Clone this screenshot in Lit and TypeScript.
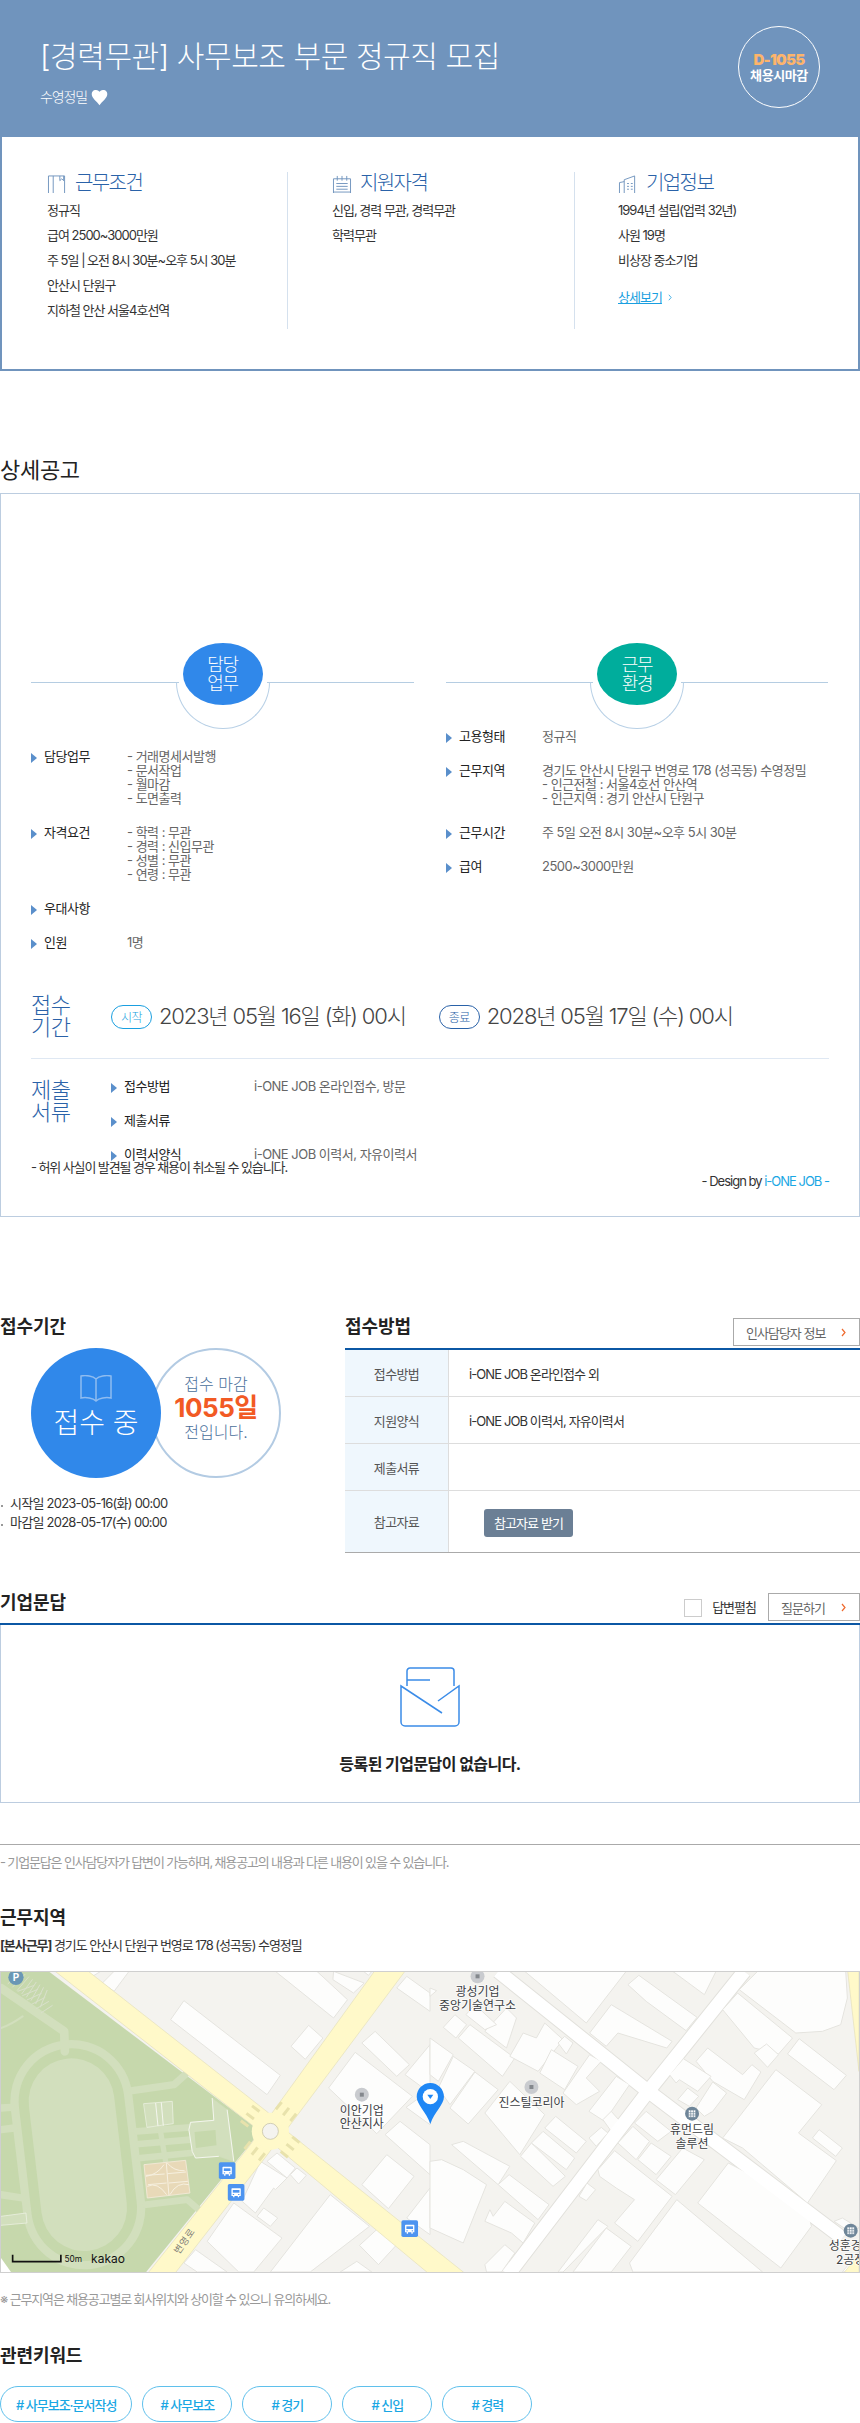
import { LitElement, html, css, svg } from "lit";
import { customElement } from "lit/decorators.js";

const FONT = css`Inter, "Noto Sans CJK KR", "Noto Sans", sans-serif`;

const LEFT_BUILDINGS = [
  "550,98 840,322 800,380 510,155", "925,172 968,210 915,274 872,235",
  "825,10 1000,150 1042,95 950,10", "1000,10 1092,45 1060,75 998,35", "305,45 340,10 385,10 340,70",
  "255,10 300,10 270,28", "1090,10 1115,10 1105,22",
  "985,360 1065,253 1237,385 1130,497", "1085,225 1125,190 1228,290 1190,325",
  "1190,60 1220,25 1290,75 1290,130", "1215,320 1290,230 1290,375", "1218,418 1250,395 1290,425 1290,470",
  "1155,500 1200,460 1290,530 1290,620", "1085,650 1160,560 1242,625 1165,722", "1220,750 1290,660 1290,800",
  "800,580 830,555 885,600 860,630", "870,620 890,600 918,622 895,648",
  "780,580 860,630 825,665 820,660 765,735 725,700", "770,745 790,720 832,750 810,775",
  "620,820 700,705 845,810 760,912 715,912", "550,885 585,845 680,912 590,912",
  "810,912 990,680 1108,775 930,912", "1078,832 1135,780 1190,830 1135,890", "1020,912 1070,880 1115,912",
];

const RIGHT_BUILDINGS = [
  "285,10 590,10 470,165", "595,50 628,22 803,148 770,188 650,100", "480,195 545,110 728,220 712,240 565,195 530,235",
  "730,10 860,10 825,80", "930,65 985,10 1250,10 1255,90 1235,170 1180,190 1100,195",
  "880,125 925,75 1090,210 1048,258 975,240", "1075,258 1110,212 1252,322 1215,365", "975,255 1012,228 1048,260 1015,298",
  "800,280 835,240 940,320 968,290 995,312 945,395 850,340", "720,320 762,272 845,325 805,370 750,335 740,345",
  "745,395 775,360 808,385 780,415", "800,420 850,342 892,375 850,430 825,445",
  "880,510 1040,305 1178,410 1108,495 1222,578 1135,705 940,540", "1150,510 1170,485 1240,540 1220,565",
  "805,705 897,585 1130,705 1147,775 1055,900", "600,885 742,695 1000,912 610,912",
  "680,635 760,540 825,575 738,680", "625,575 665,525 725,565 680,620", "565,525 610,475 660,520 620,575", "615,465 650,430 725,490 685,520",
  "505,605 555,548 728,685 625,820 555,765 615,695 560,660 510,625", "448,685 472,645 498,665 470,698",
  "385,912 505,755 535,775 400,912", "430,912 530,780 605,835 545,912", "170,912 165,890 225,830 255,855 215,912",
  "0,580 35,575 100,605 170,650 100,825 0,780", "165,760 180,725 190,745 225,700 315,765 280,825 245,795",
  "205,650 238,620 358,710 325,755", "65,530 100,520 240,595 205,650", "272,565 305,525 407,625 370,655",
  "305,525 340,490 435,570 410,605", "345,480 378,445 470,520 440,555", "165,435 240,340 345,440 270,560",
  "60,420 135,312 205,365 115,468", "25,360 70,265 135,310 60,410", "85,210 120,170 255,270 218,325",
  "40,178 75,140 110,170 78,210", "0,210 70,260 25,340 0,320", "165,190 230,120 260,150 230,240",
  "240,265 280,195 320,210 345,165 400,215 325,310", "330,315 365,245 445,295 405,365", "385,225 405,205 430,225 410,258",
  "400,375 480,260 515,280 470,330 510,370 440,410", "478,430 560,325 600,350 525,460", "520,455 545,430 570,458 545,490",
  "478,510 515,478 535,495 500,535", "108,140 135,110 200,170 165,185", "0,60 20,68 0,85",
  "1215,760 1240,750 1290,780 1260,790", "1240,912 1290,850 1290,912",
];

const CROSS_ARMS: [number, number][] = [[-0.8, -0.6], [0.62, -0.78], [0.78, 0.62], [-0.62, 0.78]];

function crossStripes() {
  const cx = 810, cy = 490;
  const out: { x1: number; y1: number; x2: number; y2: number }[] = [];
  for (const [dx, dy] of CROSS_ARMS) {
    for (const off of [-28, 0, 28]) {
      out.push({
        x1: cx + dx * 62 - dy * off, y1: cy + dy * 62 + dx * off,
        x2: cx + dx * 90 - dy * off, y2: cy + dy * 90 + dx * off,
      });
    }
  }
  return out;
}

function busIcon(x: number, y: number) {
  return svg`<g transform="translate(${x} ${y})">
    <rect class="bus-bg" width="50" height="50" rx="5"></rect>
    <path class="bus-fg" d="M13 13h24a2 2 0 0 1 2 2v21h-5v4h-4v-4H20v4h-4v-4h-5V15a2 2 0 0 1 2-2z"></path>
    <rect class="bus-bg" x="15" y="18" width="20" height="8"></rect>
    <rect class="bus-bg" x="15" y="30" width="4" height="3"></rect>
    <rect class="bus-bg" x="31" y="30" width="4" height="3"></rect>
  </g>`;
}

function poi(x: number, y: number, lines: string[], anchorY: number, dark = false) {
  return svg`
    <circle class=${dark ? "poi-dark" : "poi"} cx=${x} cy=${y} r="21"></circle>
    ${dark
      ? svg`<path class="poi-mark" d="M${x - 11} ${y - 11}h22v22h-22z M${x - 4} ${y - 11}v22 M${x + 4} ${y - 11}v22 M${x - 11} ${y - 3}h22 M${x - 11} ${y + 4}h22"></path>`
      : svg`<rect class="poi-square" x=${x - 6} y=${y - 6} width="12" height="12"></rect>`}
    ${lines.map((l, i) => svg`<text class="map-label" x=${x} y=${anchorY + i * 41}>${l}</text>`)}
  `;
}

@customElement("kakao-map")
export class KakaoMap extends LitElement {
  static styles = css`
    :host { display: block; height: 302px; border: 1px solid #cfcfcf; overflow: hidden; }
    svg { display: block; width: 858px; height: 300px; }
    .land { fill: #f4f3ef; }
    .bld { fill: #fdfdfc; stroke: #e5e4df; stroke-width: 3; }
    .park { fill: #c6d8ac; }
    .lite { fill: none; stroke: #d2dfbd; stroke-linecap: round; stroke-linejoin: round; }
    .dark { fill: none; stroke: #c6d8ac; stroke-linecap: round; }
    .road { fill: #fff9c9; stroke: #e4dfba; stroke-width: 2; }
    .road-fill { fill: #fff9c9; }
    .lane { fill: none; stroke: #e2e1dc; stroke-width: 46; }
    .lane-w { fill: none; stroke: #ffffff; stroke-width: 40; }
    .stripe { stroke: #e8e2ac; stroke-width: 9; }
    .island { fill: #f4f3ef; stroke: #bdb9a0; stroke-width: 2; }
    .white-line { fill: none; stroke: #f4f6ee; stroke-width: 3; }
    .court { fill: #e8d9b8; stroke: #f0e8d4; stroke-width: 3; }
    .court-line { fill: none; stroke: #f6f0e0; stroke-width: 3; }
    .park-cell { fill: #c6d8ac; }
    .corner { fill: #ffffff; }
    .p-bg { fill: #6a97b5; }
    .p-text { fill: #fff; font: 700 30px ${FONT}; text-anchor: middle; }
    .park-stripe { stroke: #d9e0cb; stroke-width: 3; }
    .bus-bg { fill: #4d94f0; }
    .bus-fg { fill: #fff; }
    .poi { fill: #c9cbcf; }
    .poi-square { fill: #84888d; }
    .poi-dark { fill: #6f8699; }
    .poi-mark { fill: #fff; stroke: #6f8699; stroke-width: 2; }
    .map-label { font: 400 36px ${FONT}; fill: #3c4043; text-anchor: middle; stroke: #fff; stroke-width: 5; stroke-opacity: 0.7; paint-order: stroke; letter-spacing: 0; }
    .road-label { font: 400 29px ${FONT}; fill: #85837a; text-anchor: middle; letter-spacing: 2px; }
    .scale { fill: none; stroke: #111; stroke-width: 5; }
    .scale-text { font: 400 25px ${FONT}; fill: #111; }
    .brand { font: 400 36px ${FONT}; fill: #111; }
    .pin { fill: #1f87f5; }
    .pin-hole { fill: #fff; }
  `;

  render() {
    return html`<svg viewBox="0 12 2580 900" preserveAspectRatio="none" role="img" aria-label="근무지역 지도">
      <rect class="land" x="0" y="0" width="2580" height="920"></rect>

      <polygon class="park" points="0,0 130,0 780,490 430,920 0,920"></polygon>
      <path class="lite" stroke-width="368" d="M212 400 L250 720"></path>
      <path class="dark" stroke-width="318" d="M212 400 L250 720"></path>
      <path class="lite" stroke-width="258" d="M212 400 L250 720"></path>
      <path class="lite" stroke-width="26" d="M0 60 L190 190 L192 250"></path>
      <path class="lite" stroke-width="6" d="M0 180 Q30 170 65 145"></path>
      <path class="lite" stroke-width="22" d="M395 368 L520 350 L552 322"></path>
      <path class="lite" stroke-width="22" d="M0 420 L30 418 M0 485 L40 480 M0 680 L65 690"></path>
      <path class="lite" stroke-width="20" d="M408 490 L570 478 M415 528 L570 515 M420 570 L570 555 M436 710 L560 695 L595 725"></path>
      <path class="lite" stroke-width="16" d="M478 480 L495 580"></path>
      <polygon class="lite" stroke-width="2" style="fill:#d2dfbd" points="570,463 640,457 636,392 680,425 700,580 655,565 585,570 575,550 565,485"></polygon>
      <polygon class="park-cell" points="582,492 645,486 648,532 586,540"></polygon>
      <path class="white-line" d="M635 390 L640 457 L570 463 L565 485 L575 550 L585 570 L655 565 M680 425 L700 580"></path>
      <polygon class="lite" stroke-width="2" style="fill:#d2dfbd;stroke:#f2f5ea" points="430,407 515,400 518,467 440,478"></polygon>
      <path class="white-line" d="M465 405 L472 474 M482 403 L488 473"></path>
      <polygon class="lite" stroke-width="2" style="fill:#d2dfbd;stroke:#f2f5ea" points="0,745 75,735 78,765 0,772"></polygon>
      <polygon class="court" points="430,590 555,577 568,675 440,690"></polygon>
      <path class="court-line" d="M497 584 L505 682 M436 625 Q470 620 490 590 M500 585 Q520 610 552 608 M440 655 Q470 640 498 680 M508 680 Q530 640 565 650 M436 622 L492 618 M500 617 L556 612 M442 650 L498 645 M505 645 L562 640"></path>
      <polygon class="corner" points="0,870 30,912 0,920"></polygon>
      ${[0, 1, 2, 3, 4, 5, 6, 7].map(i => svg`<line class="park-stripe" x1=${20 + i * 14} y1=${48 + i * 10} x2=${62 + i * 11} y2=${10 + i * 8}></line>`)}
      ${[0, 1, 2, 3, 4, 5].map(i => svg`<line class="park-stripe" x1=${50 + i * 14} y1=${70 + i * 13} x2=${100 + i * 11} y2=${52 + i * 12}></line>`)}

      ${LEFT_BUILDINGS.map(p => svg`<polygon class="bld" points=${p}></polygon>`)}
      <g transform="translate(1290 0)">
        <path class="lane" d="M205 10 L650 365 L1240 810"></path>
        <path class="lane" d="M945 10 L660 365 L235 920"></path>
        ${RIGHT_BUILDINGS.map(p => svg`<polygon class="bld" points=${p}></polygon>`)}
        <path class="lane-w" d="M205 10 L650 365 L1240 810"></path>
        <path class="lane-w" d="M945 10 L660 365 L235 920"></path>
      </g>

      <polygon class="road" points="150,0 250,0 805,435 860,490 1400,920 1290,920 850,555 760,475"></polygon>
      <polygon class="road" points="1130,0 1222,0 870,470 805,555 520,920 438,920 750,530 815,435"></polygon>
      <circle class="road-fill" cx="810" cy="490" r="56"></circle>
      ${crossStripes().map(s => svg`<line class="stripe" x1=${s.x1} y1=${s.y1} x2=${s.x2} y2=${s.y2}></line>`)}
      <circle class="road-fill" cx="810" cy="490" r="52"></circle>
      <circle class="island" cx="810" cy="490" r="24"></circle>
      <polygon class="road" points="2545,0 2580,0 2580,310"></polygon>
      <polygon class="road" points="2530,920 2580,858 2580,920"></polygon>

      <circle class="p-bg" cx="45" cy="28" r="23"></circle>
      <text class="p-text" x="45" y="39">P</text>

      ${busIcon(655, 583)}${busIcon(682, 648)}${busIcon(1204, 757)}

      <text class="road-label" transform="translate(560 825) rotate(-55)">변영로</text>

      ${poi(1085, 380, ["이안기업", "안산지사"], 440)}
      ${poi(1433, 25, ["광성기업", "중앙기술연구소"], 84)}
      ${poi(1595, 357, ["진스틸코리아"], 418)}
      ${poi(2078, 437, ["휴먼드림", "솔루션"], 498, true)}
      ${poi(2555, 788, ["성훈경금", "2공장"], 846, true)}

      <path class="pin" d="M1291 345 C1268 345 1250 364 1250 386 C1250 410 1278 430 1291 468 C1304 430 1332 410 1332 386 C1332 364 1314 345 1291 345Z"></path>
      <circle class="pin-hole" cx="1291" cy="386" r="23"></circle>
      <path class="pin" d="M1282 380 H1300 L1291 393Z"></path>

      <path class="scale" d="M35 860 V881 H180 V860"></path>
      <text class="scale-text" x="191" y="882">50m</text>
      <text class="brand" x="271" y="884">kakao</text>
    </svg>`;
  }
}

@customElement("app-root")
export class AppRoot extends LitElement {
  static styles = css`
    :host { display: block; width: 860px; font-family: ${FONT}; color: #333; font-size: 13px; background: #fff; }
    * { box-sizing: border-box; }
    h1, h2, h3, p, ul { margin: 0; padding: 0; }
    ul { list-style: none; }

    .hero { height: 137px; background: #7094bd; display: flex; justify-content: space-between; padding: 26px 40px 0 40px; color: #fff; }
    .hero h1 { font-size: 30px; line-height: 40px; font-weight: 300; letter-spacing: -0.42px; margin-top: 10px; }
    .company { display: flex; align-items: center; gap: 4px; margin-top: 11px; font-size: 14px; line-height: 20px; letter-spacing: -1.1px; font-weight: 300; }
    .heart { width: 17px; height: 17px; fill: #fff; }
    .dday { width: 82px; height: 82px; border: 1px solid #fff; border-radius: 50%; display: flex; flex-direction: column; align-items: center; justify-content: center; font-weight: 700; margin-right: 0; }
    .dday b { color: #fdb46b; font-size: 15px; line-height: 16px; letter-spacing: -0.7px; }
    .dday span { font-size: 13px; line-height: 15px; letter-spacing: -0.4px; }

    .summary { height: 234px; border: 2px solid #7094bd; border-top: none; display: grid; grid-template-columns: 285px 287px 1fr; padding-top: 35px; }
    .sum-col { height: 157px; padding-left: 44px; border-left: 1px solid #d5e1ee; }
    .sum-col:first-child { border-left: none; padding-left: 45px; }
    .sum-col:nth-child(3) { padding-left: 43px; }
    .sum-col h3 { display: flex; align-items: flex-start; gap: 8px; height: 26px; font-size: 20px; line-height: 22px; font-weight: 300; color: #2a62a8; letter-spacing: -1.6px; }
    .sum-col .ico { width: 20px; height: 18px; fill: none; stroke: #7094bd; stroke-width: 1; flex: none; margin-top: 3px; }
    .sum-col p { line-height: 25px; font-size: 13px; letter-spacing: -1px; color: #333; font-weight: 400; }
    .more { display: inline-flex; align-items: center; gap: 6px; margin-top: 12px; line-height: 25px; color: #1a9fe0; letter-spacing: -1px; font-weight: 400; }
    .more span { text-decoration: underline; }
    .more svg { width: 4px; height: 7px; fill: none; stroke: #1a9fe0; stroke-width: 1; }

    .detail-title { margin-top: 84px; font-size: 22px; line-height: 30px; font-weight: 400; color: #222; letter-spacing: -0.3px; }
    .detail { margin-top: 8px; border: 1px solid #bccde0; padding: 149px 30px 28px; }
    .two { display: grid; grid-template-columns: 383px 382px; column-gap: 32px; }
    .badge-head { display: flex; align-items: flex-start; height: 86px; }
    .badge-head i { flex: 1; height: 1px; margin-top: 39px; background: #b5cde2; }
    .badge { position: relative; width: 94px; height: 86px; margin: 0 -3px; flex: none; }
    .arc { position: absolute; left: 0; bottom: 0; width: 94px; height: 47px; border: 1px solid #b8d0e6; border-top: none; border-radius: 0 0 47px 47px; }
    .bubble { position: absolute; left: 7px; top: 0; width: 80px; height: 62px; border-radius: 50%; color: #fff; background: #3088ea; display: flex; align-items: center; justify-content: center; text-align: center; font-size: 18px; line-height: 19px; font-weight: 300; letter-spacing: -1.2px; }
    .bubble.green { background: #00ad9c; }
    .rows { display: flex; flex-direction: column; gap: 20px; }
    .rows.left { margin-top: 20px; }
    .row { display: grid; grid-template-columns: 13px 83px 1fr; line-height: 14px; font-size: 13px; letter-spacing: -0.5px; }
    .tri { width: 0; height: 0; margin-top: 4px; border-left: 6px solid #5a8fcb; border-top: 5px solid transparent; border-bottom: 5px solid transparent; }
    .row b { font-weight: 400; color: #222; }
    .row div { color: #666; white-space: pre-line; font-weight: 400; }
    .rows.sub .row { grid-template-columns: 13px 130px 1fr; }

    .period { display: flex; margin-top: 45px; align-items: center; height: 44px; }
    .big-label { width: 80px; font-size: 22px; line-height: 22px; color: #2a62a8; font-weight: 300; letter-spacing: -0.6px; flex: none; }
    .pill { width: 41px; height: 24px; border-radius: 12px; border: 1px solid #1a9fe0; color: #1a9fe0; font-size: 12px; letter-spacing: -0.5px; display: flex; align-items: center; justify-content: center; margin-right: 7px; flex: none; font-weight: 300; margin-top: 1px; }
    .pill.end { border-color: #2a62a8; color: #2a62a8; margin-left: 33px; }
    .date { font-size: 22px; letter-spacing: -1.15px; color: #444; font-weight: 300; line-height: 30px; white-space: nowrap; }
    .divider { height: 1px; background: #dfe8f3; margin-top: 20px; }
    .submit { display: flex; margin-top: 20px; }
    .warn { margin-top: -1px; line-height: 14px; font-size: 13px; letter-spacing: -1.1px; font-weight: 400; }
    .design { text-align: right; line-height: 14px; font-size: 13px; letter-spacing: -1px; font-weight: 400; }
    .design em { font-style: normal; color: #1aa7e4; }

    h2.sec { font-size: 18px; line-height: 26px; font-weight: 700; color: #222; letter-spacing: -0.1px; }

    .info { display: grid; grid-template-columns: 345px 515px; margin-top: 97px; }
    .venn { display: flex; padding-left: 31px; margin-top: 8px; }
    .v-blue { position: relative; width: 130px; height: 130px; border-radius: 50%; background: #3088ea; color: #fff; display: flex; flex-direction: column; align-items: center; padding-top: 27px; font-size: 28px; line-height: 38px; font-weight: 300; letter-spacing: 0; flex: none; }
    .v-blue svg { width: 32px; height: 27px; fill: none; stroke: #8fbcf0; stroke-width: 1.5; margin-bottom: 2px; }
    .v-white { width: 130px; height: 130px; margin-left: -10px; border: 2px solid #b3cbe3; border-radius: 50%; display: flex; flex-direction: column; align-items: center; padding-top: 23px; color: #4a6f9b; font-size: 16px; line-height: 22px; font-weight: 300; flex: none; }
    .v-white b { color: #f25a24; font-size: 26px; line-height: 26px; font-weight: 700; letter-spacing: -0.5px; }
    .dates { margin-top: 16px; }
    .dates li { position: relative; padding-left: 10px; line-height: 19px; font-size: 13px; letter-spacing: -0.75px; font-weight: 400; }
    .dates li::before { content: ""; position: absolute; left: 1px; top: 11px; width: 2px; height: 2px; background: #777; border-radius: 50%; }

    .sec-head { display: flex; justify-content: space-between; height: 34px; }
    .btn { width: 127px; height: 28px; margin-top: 4px; border: 1px solid #aaa; display: flex; align-items: center; justify-content: space-between; padding: 0 13px 0 12px; color: #666; font-size: 13px; letter-spacing: -1px; font-weight: 400; background: #fff; }
    .btn svg { width: 5px; height: 9px; fill: none; stroke: #ef6a2e; stroke-width: 1.2; }
    .btn.small { width: 92px; margin-top: 0; }
    .tbl { border-top: 2px solid #0b57a4; border-bottom: 1px solid #aaa; }
    .tr { display: grid; grid-template-columns: 104px 1fr; height: 47px; border-bottom: 1px solid #ddd; font-size: 13px; letter-spacing: -0.9px; }
    .tr:last-child { height: 61px; border-bottom: none; }
    .th { background: #eff7fd; border-right: 1px solid #ddd; display: flex; align-items: center; justify-content: center; color: #555; font-weight: 400; letter-spacing: -0.6px; }
    .td { display: flex; align-items: center; padding-left: 20px; color: #333; font-weight: 400; }
    .file-btn { margin-left: 15px; width: 89px; height: 28px; margin-top: 2px; border-radius: 3px; background: #6b7f95; color: #fff; display: flex; align-items: center; justify-content: center; font-weight: 400; }

    .qa-head { display: flex; align-items: flex-start; height: 33px; margin-top: 37px; }
    .qa-head h2 { flex: 1; }
    .check { width: 18px; height: 18px; border: 1px solid #ccc; margin-top: 9px; }
    .check-label { margin: 8px 12px 0 10px; font-size: 13px; line-height: 18px; letter-spacing: -1px; font-weight: 400; color: #333; }
    .qa-head .btn { margin-top: 3px; }
    .qa-box { border-top: 2px solid #0b57a4; }
    .qa-body { border: 1px solid #bccde0; border-top: none; height: 178px; padding-top: 42px; display: flex; flex-direction: column; align-items: center; }
    .qa-body svg { width: 60px; height: 60px; fill: none; stroke: #3b8ce8; stroke-width: 1.5; }
    .qa-body p { margin-top: 25px; font-size: 16px; line-height: 24px; font-weight: 700; letter-spacing: -0.55px; color: #222; }
    .rule { height: 1px; background: #aaa; margin-top: 41px; }
    .note { color: #999; line-height: 20px; font-size: 13px; letter-spacing: -1.15px; font-weight: 400; }
    .note.top { margin-top: 7px; }
    h2.sec.area { margin-top: 33px; }
    .addr { margin-top: 4px; line-height: 20px; font-size: 13px; letter-spacing: -1.05px; font-weight: 400; }
    .addr b { font-weight: 700; }
    kakao-map { margin-top: 16px; }
    .note.map-note { margin-top: 16px; }
    h2.sec.kw { margin-top: 34px; }
    .tags { display: flex; gap: 10px; margin-top: 17px; }
    .tag { min-width: 90px; height: 36px; padding: 0 15px; border: 1px solid #5fc0ec; border-radius: 18px; color: #1aa7e4; display: flex; align-items: center; justify-content: center; font-size: 13px; font-weight: 500; letter-spacing: -1px; }
  `;

  private chevron() {
    return html`<svg viewBox="0 0 5 9"><path d="M1 1l3 3.5-3 3.5"></path></svg>`;
  }

  private row(label: string, value = "") {
    return html`<div class="row"><span class="tri"></span><b>${label}</b><div>${value}</div></div>`;
  }

  private badge(a: string, b: string, green = false) {
    return html`<div class="badge-head"><i></i><div class="badge">
      <span class="arc"></span>
      <div class="bubble ${green ? "green" : ""}">${a}<br />${b}</div>
    </div><i></i></div>`;
  }

  render() {
    return html`
      <header class="hero">
        <div>
          <h1>[경력무관] 사무보조 부문 정규직 모집</h1>
          <div class="company">수영정밀
            <svg class="heart" viewBox="0 0 24 24"><path d="M12 23C8 17 1 13 1 7a6 6 0 0 1 11-3 6 6 0 0 1 11 3c0 6-7 10-11 16z"></path></svg>
          </div>
        </div>
        <div class="dday"><b>D-1055</b><span>채용시마감</span></div>
      </header>

      <section class="summary">
        <div class="sum-col">
          <h3><svg class="ico" viewBox="0 0 20 19"><path d="M1 19V1h17v18M6 19V1M13 1v5l2-2 2 2V1"></path></svg>근무조건</h3>
          <p>정규직</p><p>급여 2500~3000만원</p><p>주 5일 | 오전 8시 30분~오후 5시 30분</p><p>안산시 단원구</p><p>지하철 안산 서울4호선역</p>
        </div>
        <div class="sum-col">
          <h3><svg class="ico" viewBox="0 0 20 19"><path d="M1 19V4h18v15M5 1v5M10 1v5M15 1v5M4 9h12M4 12h12M4 15h12M1 18h18"></path></svg>지원자격</h3>
          <p>신입, 경력 무관, 경력무관</p><p>학력무관</p>
        </div>
        <div class="sum-col">
          <h3><svg class="ico" viewBox="0 0 20 19"><path d="M1 19V8l5-1M6 19V5l11-4v18M9 9h2M13 9h2M9 12h2M13 12h2M9 15h2M13 15h2"></path></svg>기업정보</h3>
          <p>1994년 설립(업력 32년)</p><p>사원 19명</p><p>비상장 중소기업</p>
          <div class="more"><span>상세보기</span>${this.chevron()}</div>
        </div>
      </section>

      <h2 class="detail-title">상세공고</h2>
      <section class="detail">
        <div class="two">
          <div>
            ${this.badge("담당", "업무")}
            <div class="rows left">
              ${this.row("담당업무", "- 거래명세서발행\n- 문서작업\n- 월마감\n- 도면출력")}
              ${this.row("자격요건", "- 학력 : 무관\n- 경력 : 신입무관\n- 성별 : 무관\n- 연령 : 무관")}
              ${this.row("우대사항")}
              ${this.row("인원", "1명")}
            </div>
          </div>
          <div>
            ${this.badge("근무", "환경", true)}
            <div class="rows">
              ${this.row("고용형태", "정규직")}
              ${this.row("근무지역", "경기도 안산시 단원구 번영로 178 (성곡동) 수영정밀\n- 인근전철 : 서울4호선 안산역\n- 인근지역 : 경기 안산시 단원구")}
              ${this.row("근무시간", "주 5일 오전 8시 30분~오후 5시 30분")}
              ${this.row("급여", "2500~3000만원")}
            </div>
          </div>
        </div>
        <div class="period">
          <div class="big-label">접수<br />기간</div>
          <span class="pill">시작</span><span class="date">2023년 05월 16일 (화) 00시</span>
          <span class="pill end">종료</span><span class="date">2028년 05월 17일 (수) 00시</span>
        </div>
        <div class="divider"></div>
        <div class="submit">
          <div class="big-label">제출<br />서류</div>
          <div class="rows sub">
            ${this.row("접수방법", "i-ONE JOB 온라인접수, 방문")}
            ${this.row("제출서류")}
            ${this.row("이력서양식", "i-ONE JOB 이력서, 자유이력서")}
          </div>
        </div>
        <p class="warn">- 허위 사실이 발견될 경우 채용이 취소될 수 있습니다.</p>
        <p class="design">- Design by <em>i-ONE JOB -</em></p>
      </section>

      <section class="info">
        <div>
          <h2 class="sec">접수기간</h2>
          <div class="venn">
            <div class="v-blue">
              <svg viewBox="0 0 32 27"><path d="M16 4C13 1 6 0 1 1v22c5-1 12 0 15 3 3-3 10-4 15-3V1c-5-1-12 0-15 3zM16 4v22"></path></svg>
              접수 중
            </div>
            <div class="v-white">접수 마감<b>1055일</b>전입니다.</div>
          </div>
          <ul class="dates">
            <li>시작일 2023-05-16(화) 00:00</li>
            <li>마감일 2028-05-17(수) 00:00</li>
          </ul>
        </div>
        <div>
          <div class="sec-head">
            <h2 class="sec">접수방법</h2>
            <div class="btn">인사담당자 정보${this.chevron()}</div>
          </div>
          <div class="tbl">
            <div class="tr"><div class="th">접수방법</div><div class="td">i-ONE JOB 온라인접수 외</div></div>
            <div class="tr"><div class="th">지원양식</div><div class="td">i-ONE JOB 이력서, 자유이력서</div></div>
            <div class="tr"><div class="th">제출서류</div><div class="td"></div></div>
            <div class="tr"><div class="th">참고자료</div><div class="td"><div class="file-btn">참고자료 받기</div></div></div>
          </div>
        </div>
      </section>

      <div class="qa-head">
        <h2 class="sec">기업문답</h2>
        <span class="check"></span><span class="check-label">답변펼침</span>
        <div class="btn small">질문하기${this.chevron()}</div>
      </div>
      <section class="qa-box">
        <div class="qa-body">
          <svg viewBox="0 0 60 60"><path d="M7 19V4a3 3 0 0 1 3-3h41a3 3 0 0 1 3 3v15M7 13h23M38 34L59 19v36a4 4 0 0 1-4 4H5a4 4 0 0 1-4-4V19l41 27"></path></svg>
          <p>등록된 기업문답이 없습니다.</p>
        </div>
      </section>
      <div class="rule"></div>
      <p class="note top">- 기업문답은 인사담당자가 답변이 가능하며, 채용공고의 내용과 다른 내용이 있을 수 있습니다.</p>

      <h2 class="sec area">근무지역</h2>
      <p class="addr"><b>[본사근무]</b> 경기도 안산시 단원구 번영로 178 (성곡동) 수영정밀</p>
      <kakao-map></kakao-map>
      <p class="note map-note">※ 근무지역은 채용공고별로 회사위치와 상이할 수 있으니 유의하세요.</p>

      <h2 class="sec kw">관련키워드</h2>
      <div class="tags">
        <span class="tag"># 사무보조·문서작성</span>
        <span class="tag"># 사무보조</span>
        <span class="tag"># 경기</span>
        <span class="tag"># 신입</span>
        <span class="tag"># 경력</span>
      </div>
    `;
  }
}
